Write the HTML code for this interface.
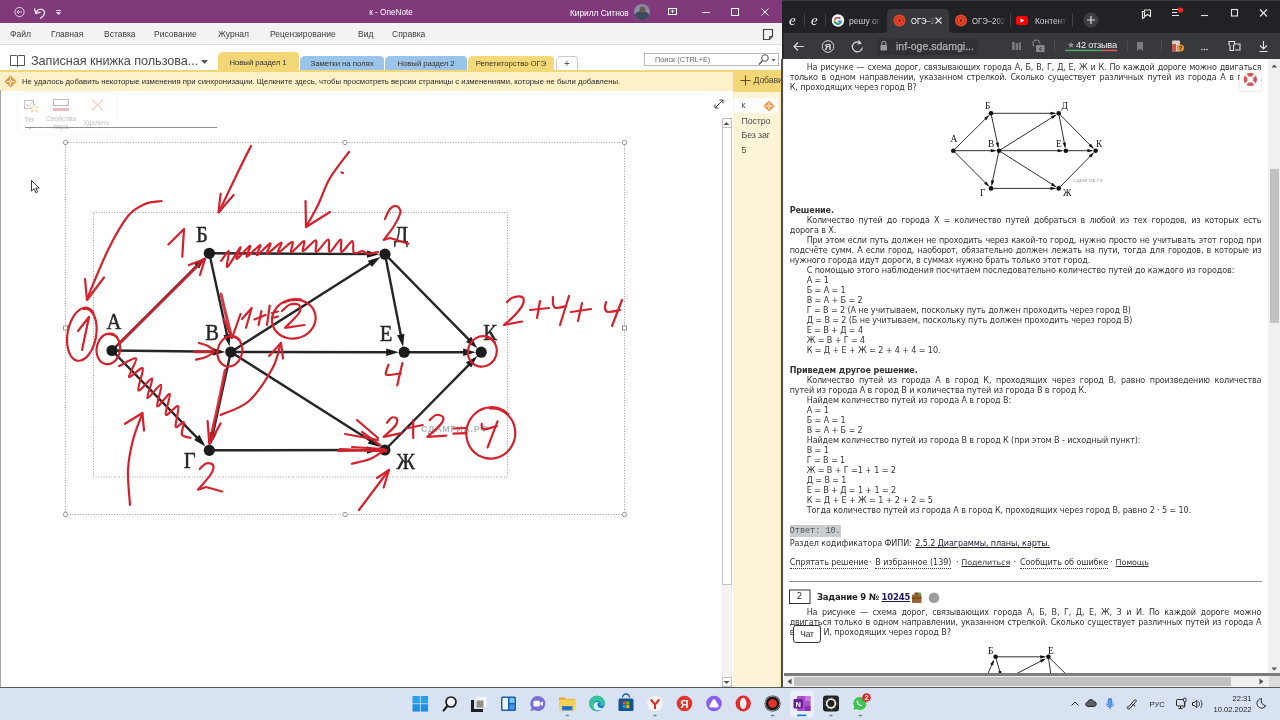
<!DOCTYPE html>
<html lang="ru"><head><meta charset="utf-8"><title>screen</title>
<style>
*{box-sizing:border-box}
html,body{margin:0;padding:0}
#on,#br,#tb{will-change:transform;opacity:0.999}
body{width:1280px;height:720px;overflow:hidden;position:relative;background:#fff;font-family:"Liberation Sans",sans-serif;}
.abs{position:absolute}
/* OneNote */
#on{position:absolute;left:0;top:0;width:782px;height:688px;background:#fff;overflow:hidden}
#on .title{position:absolute;left:0;top:0;width:782px;height:23px;background:#80397b;color:#fff;font-size:8px}
#on .menu{position:absolute;left:0;top:23px;width:782px;height:22px;background:#f3f3f3;border-bottom:1px solid #dcdcdc;font-size:8.5px;color:#3b3b3b}
#on .menu span{position:absolute;top:6px;white-space:nowrap}
#on .nb{position:absolute;left:0;top:45px;width:782px;height:27px;background:#fff}
.tab{position:absolute;height:15px;top:11px;border-radius:5px 4px 0 0;font-size:7.8px;color:#333;text-align:center;line-height:15px;white-space:nowrap;letter-spacing:-0.05px}
#on .info{position:absolute;left:0;top:70px;width:782px;height:21px;background:#fdf1c7;border-top:2.500px solid #f3d777;font-size:7.78px;color:#2b2b2b}
/* Browser */
#br{position:absolute;left:782px;top:0;width:498px;height:688px;background:#fff;overflow:hidden}
#br .tabs{position:absolute;left:0;top:0;width:498px;height:33px;background:#202226}
#br .tool{position:absolute;left:0;top:33px;width:498px;height:27px;background:#37393d}
#br .content{position:absolute;left:2px;top:59px;width:485px;height:613.5px;background:#fff;overflow:hidden;font-family:"DejaVu Sans","Liberation Sans",sans-serif;font-size:8.05px;color:#333;letter-spacing:-0.105px}
.ln{position:absolute;left:5.7px;width:471.6px;height:10px;line-height:10px;white-space:nowrap}
.j{text-align:justify;text-align-last:justify;white-space:normal;letter-spacing:-0.2px}
.in{padding-left:17px}
/* Taskbar */
#tb{position:absolute;left:0;top:687px;width:1280px;height:33px;background:#d9e2f2;border-top:1px solid #5a5a5a}
</style></head>
<body>
<div id="on">
<div class="title">
<svg class="abs" style="left:0;top:0" width="782" height="23" viewBox="0 0 782 23">
<g fill="none" stroke="#e6cfe4" stroke-width="1">
<circle cx="19.5" cy="12" r="4.6"/><path d="M22 12h-5m2-2l-2 2l2 2"/>
<path d="M34.500 8.500l1.300 5l4.700-1.300M36 13c2-5.500 9-4.500 8.500 0c-.3 2.500-2 4-4.500 5.500" stroke="#fff" stroke-width="1.200"/>
<path d="M56 10.5h5" /><path d="M56.5 12.5l2 2l2-2z" fill="#e6cfe4"/>
</g>
<text x="391" y="15" text-anchor="middle" font-size="8.2" fill="#fff" font-family="Liberation Sans, sans-serif">к  -  OneNote</text>
<text x="570" y="15.5" font-size="8.3" fill="#fff" font-family="Liberation Sans, sans-serif">Кирилл Ситнов</text>
<circle cx="642" cy="12" r="8" fill="#8a8aa0"/><path d="M634.6 15a8 8 0 0 0 14.8 0c-2-3-4-4-7.400-4s-5.400 1-7.400 4z" fill="#3d4a5e"/><circle cx="642.500" cy="9.500" r="3" fill="#6b5a55"/>
<g fill="none" stroke="#fff" stroke-width="1">
<rect x="668.500" y="8.500" width="8" height="6"/><path d="M672.500 13v-3m-1.500 1.500l1.500-1.500l1.500 1.500"/>
<path d="M702 12.500h8"/>
<rect x="731.500" y="8.500" width="7" height="7"/>
<path d="M761.500 8.500l7 7m0-7l-7 7"/>
</g></svg>
</div>
<div class="menu">
<span style="left:10px">Файл</span><span style="left:51px">Главная</span><span style="left:104px">Вставка</span><span style="left:154px">Рисование</span><span style="left:218px">Журнал</span><span style="left:270px">Рецензирование</span><span style="left:358px">Вид</span><span style="left:392px">Справка</span>
<svg class="abs" style="left:760px;top:4px" width="16" height="16" viewBox="0 0 16 16"><path d="M3.500 2.500h9v7l-3 3h-6z" fill="none" stroke="#444" stroke-width="1.200"/><path d="M12.500 9.500h-3v3" fill="none" stroke="#444" stroke-width="1"/></svg>
</div>
<div class="nb">
<svg class="abs" style="left:9px;top:9px" width="17" height="14" viewBox="0 0 17 14"><path d="M1.500 1.500h5.500q1.500 0 1.500 1.200q0-1.200 1.500-1.200h5.500v10h-5.500q-1.500 0-1.500 1q0-1-1.500-1h-5.500zM8.500 2.700v9.800" fill="#fff" stroke="#555" stroke-width="1"/></svg>
<div class="abs" style="left:31px;top:8.500px;font-size:12.700px;color:#4a4a4a;white-space:nowrap;letter-spacing:-0.05px">Записная книжка пользова...</div>
<svg class="abs" style="left:200px;top:14px" width="9" height="6" viewBox="0 0 9 6"><path d="M1 1h7l-3.500 4z" fill="#555"/></svg>
<div class="tab" style="left:217.500px;width:81px;top:7px;height:20px;line-height:21px;background:#f3d777;">Новый раздел 1</div>
<div class="tab" style="left:300px;width:84px;background:#9bc4ea;">Заметки на полях</div>
<div class="tab" style="left:385px;width:82px;background:#9bc4ea;">Новый раздел  2</div>
<div class="tab" style="left:468px;width:86px;background:#f4d978;">Репетиторство ОГЭ</div>
<div class="tab" style="left:556px;width:22px;background:#fff;border:1px solid #ccc;border-bottom:none;font-size:10px;line-height:13px;color:#555">+</div>
<div class="abs" style="left:644px;top:8px;width:135px;height:13px;border:1px solid #b9b9b9;background:#fff;font-size:7.3px;color:#666;line-height:11px;padding-left:10px">Поиск (CTRL+E)</div>
<svg class="abs" style="left:757px;top:8px" width="22" height="13" viewBox="0 0 22 13"><circle cx="8" cy="5" r="3.300" fill="none" stroke="#555" stroke-width="1"/><path d="M5.500 7.500l-3.500 4" stroke="#555" stroke-width="1.200"/><path d="M14.500 6h4l-2 2.500z" fill="#555"/></svg>
</div>
<div class="info">
<svg class="abs" style="left:4px;top:3px" width="13" height="13" viewBox="0 0 13 13"><path d="M6.500 0.500l6 6l-6 6l-6-6z" fill="#f0923a"/><path d="M2.500 6.500h8M6.500 2.500v8" stroke="#fff" stroke-width="1"/><circle cx="6.500" cy="6.500" r="1.700" fill="#fff"/><circle cx="6.500" cy="6.500" r="0.900" fill="#f0923a"/></svg>
<div class="abs" style="left:22px;top:5.200px;white-space:nowrap">Не удалось добавить некоторые изменения при синхронизации. Щелкните здесь, чтобы просмотреть версии страницы с изменениями, которые не были добавлены.</div>
<div class="abs" style="left:732.500px;top:-2px;width:49.500px;height:22px;background:#f3d777"></div>
<svg class="abs" style="left:739.500px;top:2.500px" width="11" height="11" viewBox="0 0 11 11"><path d="M0.500 5.500h10M5.500 0.500v10" stroke="#5a5030" stroke-width="1.100"/></svg>
<div class="abs" style="left:753.500px;top:3px;font-size:8.700px;color:#4a4535;white-space:nowrap;letter-spacing:-0.1px">Добави</div>
</div>
<div id="page"><!--PAGE--><div class="abs" style="left:0;top:90px;width:1px;height:598px;background:#a8a4a8"></div>
<!-- faded floating toolbar -->
<div class="abs" style="left:18px;top:93px;width:98px;height:40px;background:#fff;box-shadow:0 0 4px rgba(0,0,0,0.10);opacity:0.55">
<svg class="abs" style="left:4px;top:3px" width="90" height="18" viewBox="0 0 90 18"><rect x="2.500" y="4.500" width="9" height="8" fill="none" stroke="#999" stroke-width="1"/><path d="M4 8l2.500 2.500l4.500-5" fill="none" stroke="#999"/><path d="M12.500 8l1.500 3h3l-2.400 2l1 3.200l-3.100-2l-3 2l1-3.200l-2.500-2h3z" fill="#fff" stroke="#e0b040" stroke-width="0.8"/>
<rect x="31.500" y="3.500" width="15" height="6" fill="#fff" stroke="#888"/><rect x="31" y="12" width="16" height="3" fill="#e07a8a"/>
<path d="M70 3.500l11 11m0-11l-11 11" stroke="#f0a9a0" stroke-width="1.1"/></svg>
<div class="abs" style="left:6.500px;top:22.500px;font-size:6.8px;color:#888">Тег</div><svg class="abs" style="left:9px;top:32.500px" width="6" height="4" viewBox="0 0 6 4"><path d="M0.500 0.500l2.500 2.500l2.500-2.500" fill="none" stroke="#888" stroke-width="0.800"/></svg>
<div class="abs" style="left:24px;top:21.800px;font-size:6.8px;color:#888;width:38px;text-align:center;line-height:8.5px">Свойства пера</div>
<div class="abs" style="left:65.500px;top:26px;font-size:6.8px;color:#999">Удалить</div>
</div>
<div class="abs" style="left:24.500px;top:126.500px;width:192px;height:1px;background:#8f8f8f"></div>
<!-- cursor -->
<svg class="abs" style="left:30px;top:179px" width="12" height="16" viewBox="0 0 12 16"><path d="M1.500 1.500v10.500l2.600-2.300l1.800 4l1.700-.8l-1.800-3.800h3.400z" fill="#fff" stroke="#222" stroke-width="0.9" stroke-linejoin="round"/></svg>
<!-- expand icon -->
<svg class="abs" style="left:713px;top:98px" width="12" height="12" viewBox="0 0 12 12"><path d="M2 10l8-8M2 6.500v3.500h3.500M6.500 2h3.500v3.500" fill="none" stroke="#444" stroke-width="1"/></svg>
<!-- page scrollbar -->
<div class="abs" style="left:721.500px;top:118px;width:10px;height:569px;background:#f4f4f4;border-left:1px solid #ececec;border-right:1px solid #ececec"></div>
<div class="abs" style="left:721.500px;top:118px;width:10px;height:10px;border:1px solid #bdbdbd;background:#fff"></div>
<svg class="abs" style="left:723px;top:120.500px" width="7" height="5" viewBox="0 0 7 5"><path d="M0.500 4l3-3l3 3z" fill="#555"/></svg>
<div class="abs" style="left:721.500px;top:127px;width:10px;height:458px;border:1px solid #c4c4c4;background:#fff"></div>
<div class="abs" style="left:721.500px;top:677px;width:10px;height:10px;border:1px solid #bdbdbd;background:#fff"></div>
<svg class="abs" style="left:723px;top:680px" width="7" height="5" viewBox="0 0 7 5"><path d="M0.500 1l3 3l3-3z" fill="#555"/></svg>
<!-- right pane -->
<div class="abs" style="left:732.500px;top:90px;width:49.500px;height:598px;background:#fdf4d8;border-right:2px solid #f3e3b0"></div>
<div class="abs" style="left:732.500px;top:90px;width:49.500px;height:1.700px;background:#f3d777"></div>
<div class="abs" style="left:733.500px;top:98.300px;width:44px;height:14.500px;background:#fff"></div>
<div class="abs" style="left:741.500px;top:100px;font-size:8.500px;color:#444">к</div>
<svg class="abs" style="left:762.500px;top:99.500px" width="12" height="12" viewBox="0 0 13 13"><path d="M6.500 0.500l6 6l-6 6l-6-6z" fill="#f0923a"/><path d="M2.500 6.500h8M6.500 2.500v8" stroke="#fff" stroke-width="1"/><circle cx="6.500" cy="6.500" r="1.700" fill="#fff"/><circle cx="6.500" cy="6.500" r="0.900" fill="#f0923a"/></svg>
<div class="abs" style="left:741.500px;top:113.500px;font-size:8.800px;color:#4a4a4a;line-height:14.600px;white-space:nowrap;letter-spacing:-0.1px">Постро<br>Без заг<br>5</div>
<div class="abs" style="left:781px;top:59px;width:1px;height:629px;background:#4f4f4f"></div>
<svg class="abs" style="left:0;top:90px" width="782" height="598" viewBox="0 90 782 598" font-family="Liberation Serif, serif">
<g fill="none" stroke="#9a9a9a" stroke-width="1" stroke-dasharray="1 1.6">
<rect x="65.5" y="142.500" width="559" height="372"/>
<rect x="93.500" y="212.500" width="414" height="264.500"/>
</g>
<g fill="#fff" stroke="#8a8a8a" stroke-width="0.9">
<circle cx="65.5" cy="142.5" r="2.2"/>
<circle cx="345" cy="142.5" r="2.2"/>
<circle cx="624.5" cy="142.5" r="2.2"/>
<rect x="63.5" y="326" width="4" height="4"/>
<rect x="622.5" y="326" width="4" height="4"/>
<circle cx="65.5" cy="514.5" r="2.2"/>
<circle cx="345" cy="514.5" r="2.2"/>
<circle cx="624.5" cy="514.5" r="2.2"/>
</g>
<g stroke="#262626" stroke-width="2.4" fill="#1c1c1c" stroke-linecap="round">
<path d="M112.0 350.5L200.8 261.8" fill="none"/>
<path d="M205.4 257.2L199.2 268.6L194.0 263.4Z" stroke="none"/>
<path d="M112.0 350.5L218.8 351.8" fill="none"/>
<path d="M225.3 351.9L212.8 355.5L212.8 348.1Z" stroke="none"/>
<path d="M112.0 350.5L200.9 441.7" fill="none"/>
<path d="M205.5 446.4L194.1 440.0L199.4 434.8Z" stroke="none"/>
<path d="M209.3 253.3L228.2 340.3" fill="none"/>
<path d="M229.6 346.6L223.4 335.2L230.6 333.6Z" stroke="none"/>
<path d="M209.3 253.3L373.0 254.1" fill="none"/>
<path d="M379.5 254.2L367.0 257.8L367.0 250.4Z" stroke="none"/>
<path d="M230.8 352.0L374.9 260.6" fill="none"/>
<path d="M380.4 257.1L371.8 267.0L367.8 260.7Z" stroke="none"/>
<path d="M230.8 352.0L392.2 352.2" fill="none"/>
<path d="M398.7 352.2L386.2 355.9L386.2 348.5Z" stroke="none"/>
<path d="M230.8 352.0L211.9 438.6" fill="none"/>
<path d="M210.5 444.9L209.5 431.9L216.8 433.5Z" stroke="none"/>
<path d="M230.8 352.0L374.8 443.6" fill="none"/>
<path d="M380.3 447.0L367.7 443.5L371.7 437.2Z" stroke="none"/>
<path d="M209.3 450.3L372.9 450.0" fill="none"/>
<path d="M379.4 450.0L366.9 453.7L366.9 446.3Z" stroke="none"/>
<path d="M385.0 254.2L401.9 340.4" fill="none"/>
<path d="M403.1 346.8L397.1 335.2L404.4 333.8Z" stroke="none"/>
<path d="M385.0 254.2L472.8 343.6" fill="none"/>
<path d="M477.3 348.3L466.0 341.9L471.2 336.8Z" stroke="none"/>
<path d="M404.2 352.2L469.2 352.2" fill="none"/>
<path d="M475.7 352.2L463.2 355.9L463.2 348.5Z" stroke="none"/>
<path d="M384.9 450.0L472.8 360.8" fill="none"/>
<path d="M477.3 356.1L471.2 367.6L465.9 362.4Z" stroke="none"/>
<circle cx="112" cy="350.5" r="5.6" stroke="none"/>
<circle cx="209.3" cy="253.3" r="5.6" stroke="none"/>
<circle cx="230.8" cy="352" r="5.6" stroke="none"/>
<circle cx="209.3" cy="450.3" r="5.6" stroke="none"/>
<circle cx="385" cy="254.2" r="5.6" stroke="none"/>
<circle cx="404.2" cy="352.2" r="5.6" stroke="none"/>
<circle cx="481.2" cy="352.2" r="5.6" stroke="none"/>
<circle cx="384.9" cy="450" r="5.6" stroke="none"/>
</g>
<g font-size="24" fill="#262626" stroke="#262626" stroke-width="0.45">
<text transform="translate(106.5 329.2) scale(0.86 1)">А</text>
<text transform="translate(196 241.8) scale(0.86 1)">Б</text>
<text transform="translate(205.2 340) scale(0.86 1)">В</text>
<text transform="translate(183.7 468) scale(0.86 1)">Г</text>
<text transform="translate(394 241.7) scale(0.86 1)">Д</text>
<text transform="translate(379.8 340.5) scale(0.86 1)">Е</text>
<text transform="translate(483.3 340) scale(0.86 1)">К</text>
<text transform="translate(396.5 468.6) scale(0.86 1)">Ж</text>
</g>
<text x="421" y="432" font-size="9" fill="#a9b7bd" font-weight="bold" font-family="Liberation Sans, sans-serif" textLength="67" lengthAdjust="spacing">СДАМГИА.РФ</text>
<g fill="none" stroke="#d4212c" stroke-width="2.2" stroke-linecap="round" stroke-linejoin="round">
<path d="M251.0 146.0C248.8 150.3 243.3 161.0 238.0 172.0C232.7 183.0 222.2 205.3 219.0 212.0"/>
<path d="M220.6 193.8L218.5 212.5L233.6 195.0"/>
<path d="M349.0 152.0C345.8 156.3 335.2 169.2 330.0 178.0C324.8 186.8 322.0 196.8 318.0 205.0C314.0 213.2 308.0 223.3 306.0 227.0"/>
<path d="M305.5 201.0L306.0 227.0L330.0 212.0"/>
<path d="M341.5 172.5L343.0 173.0"/>
<path d="M161.5 201.0C158.8 201.5 150.6 201.5 145.0 204.0C139.4 206.5 134.2 208.3 128.0 216.0C121.8 223.7 114.8 236.2 108.0 250.0C101.2 263.8 90.5 290.8 87.0 299.0"/>
<path d="M85.0 279.0L87.0 300.0L104.0 277.5"/>
<path d="M168.4 244.5L184.0 229.0L182.3 256.7"/>
<path d="M221.1 260.9C222.4 259.3 227.9 250.3 228.9 251.2C229.9 252.2 225.4 267.5 227.3 266.9C229.2 266.2 238.8 248.6 240.3 247.3C241.9 246.0 235.1 259.3 236.7 259.1C238.3 258.8 248.3 246.2 250.0 245.8C251.7 245.4 245.2 256.8 246.9 256.7C248.6 256.6 258.5 245.3 260.2 245.0C261.8 244.7 255.3 255.4 257.0 255.2C258.7 254.9 268.6 243.7 270.3 243.4C272.0 243.2 265.4 253.7 267.2 253.6C269.0 253.5 279.4 242.8 281.2 242.7C283.1 242.5 276.3 252.9 278.1 252.8C279.9 252.7 290.0 242.0 292.2 241.9C294.4 241.7 289.5 252.2 291.4 252.0C293.4 251.9 302.0 241.2 303.9 241.1C305.9 241.0 301.2 251.4 303.1 251.2C305.1 251.1 313.4 240.2 315.6 240.3C317.8 240.4 314.3 252.2 316.4 252.0C318.5 251.9 325.9 239.5 328.1 239.5C330.3 239.5 327.6 252.0 329.7 252.0C331.8 252.0 338.7 239.5 340.6 239.5C342.6 239.5 339.5 251.8 341.4 252.0C343.4 252.3 350.3 241.0 352.3 241.1C354.4 241.2 352.2 251.1 353.9 252.8C355.6 254.5 360.2 251.1 362.5 251.2C364.8 251.4 365.4 253.5 368.0 253.6C370.6 253.7 376.4 252.3 378.1 252.0"/>
<path d="M189.0 265.0L205.0 259.0L200.0 275.0"/>
<path d="M83.3 309.0C83.9 309.0 85.8 308.7 87.0 308.9C88.2 309.2 89.3 309.8 90.3 310.6C91.4 311.5 92.4 312.6 93.2 313.9C94.0 315.3 94.7 316.9 95.2 318.7C95.8 320.4 96.2 322.4 96.4 324.5C96.6 326.5 96.7 328.8 96.6 331.0C96.5 333.2 96.2 335.6 95.8 337.8C95.4 340.0 94.8 342.3 94.0 344.4C93.3 346.5 92.4 348.5 91.5 350.3C90.5 352.1 89.4 353.8 88.2 355.2C87.1 356.6 85.8 357.8 84.6 358.7C83.3 359.5 82.0 360.2 80.7 360.5C79.4 360.8 78.1 360.8 76.9 360.6C75.7 360.3 74.5 359.7 73.5 358.9C72.4 358.0 71.4 356.8 70.6 355.5C69.8 354.1 69.1 352.4 68.5 350.7C68.0 348.9 67.5 346.8 67.3 344.7C67.1 342.6 67.0 340.3 67.1 338.1C67.2 335.8 67.5 333.4 67.9 331.1C68.4 328.9 69.0 326.5 69.7 324.4C70.5 322.3 71.4 320.2 72.3 318.4C73.3 316.5 74.5 314.8 75.6 313.4C76.8 312.0 78.1 310.8 79.4 309.9C80.7 309.0 82.0 308.3 83.3 308.0C84.6 307.7 85.9 307.6 87.2 307.9C88.4 308.2 89.6 308.8 90.7 309.7C91.8 310.5 93.1 312.5 93.6 313.1"/>
<path d="M78.0 331.0L89.0 317.0L82.0 350.0"/>
<path d="M108.5 334.2C109.0 334.2 110.5 334.1 111.5 334.3C112.4 334.5 113.4 334.9 114.3 335.4C115.2 335.9 116.0 336.6 116.7 337.5C117.5 338.3 118.1 339.3 118.6 340.3C119.1 341.4 119.5 342.5 119.8 343.8C120.1 345.0 120.2 346.3 120.2 347.6C120.2 348.9 120.1 350.2 119.9 351.5C119.6 352.8 119.2 354.1 118.7 355.3C118.2 356.5 117.6 357.6 116.9 358.6C116.2 359.6 115.3 360.6 114.4 361.3C113.6 362.1 112.6 362.8 111.6 363.2C110.6 363.7 109.6 364.0 108.5 364.1C107.5 364.3 106.5 364.2 105.5 364.0C104.5 363.8 103.5 363.4 102.6 362.9C101.7 362.3 100.8 361.6 100.1 360.8C99.4 359.9 98.7 358.9 98.2 357.9C97.7 356.8 97.2 355.6 97.0 354.4C96.7 353.1 96.5 351.8 96.5 350.5C96.5 349.1 96.7 347.8 96.9 346.4C97.2 345.1 97.6 343.8 98.1 342.6C98.6 341.4 99.2 340.2 100.0 339.2C100.7 338.1 101.5 337.2 102.4 336.4C103.3 335.6 104.3 335.0 105.3 334.5C106.3 334.0 107.4 333.7 108.5 333.6C109.5 333.4 110.6 333.5 111.6 333.7C112.6 333.9 113.6 334.3 114.5 334.9C115.4 335.4 116.6 336.6 117.1 337.0"/>
<path d="M224.0 319.4L232.0 338.0L240.5 314.0"/>
<path d="M242.0 319.0L251.7 308.0L246.0 327.8"/>
<path d="M254.4 319.4L265.6 315.0"/>
<path d="M261.4 311.0L258.6 325.0"/>
<path d="M269.7 305.6L267.0 325.0"/>
<path d="M272.0 313.0L278.0 311.5"/>
<path d="M272.0 318.0L278.0 316.5"/>
<path d="M284.5 302.4C285.4 302.1 287.9 300.9 289.8 300.4C291.6 300.0 293.5 299.8 295.3 299.8C297.2 299.7 299.1 300.0 300.8 300.4C302.6 300.8 304.3 301.5 305.9 302.3C307.4 303.1 308.9 304.2 310.1 305.3C311.4 306.5 312.5 307.9 313.3 309.3C314.1 310.8 314.8 312.4 315.2 314.0C315.5 315.6 315.7 317.3 315.6 319.0C315.5 320.7 315.1 322.4 314.5 324.0C314.0 325.7 313.1 327.3 312.1 328.7C311.1 330.2 309.8 331.6 308.4 332.8C307.0 334.0 305.4 335.1 303.7 335.9C302.0 336.8 300.2 337.5 298.3 337.9C296.5 338.4 294.5 338.6 292.6 338.6C290.8 338.6 288.8 338.4 287.0 338.0C285.2 337.6 283.5 336.9 281.9 336.1C280.3 335.2 278.8 334.1 277.6 332.9C276.3 331.7 275.2 330.3 274.3 328.9C273.5 327.4 272.8 325.8 272.4 324.1C272.0 322.5 271.9 320.7 272.0 319.0C272.1 317.3 272.5 315.5 273.1 313.9C273.7 312.2 274.5 310.6 275.6 309.1C276.6 307.6 277.9 306.1 279.3 304.9C280.8 303.7 282.4 302.6 284.1 301.7C285.8 300.9 287.7 300.2 289.6 299.7C291.5 299.2 293.5 299.0 295.4 299.0C297.3 299.0 300.1 299.5 301.1 299.6"/>
<path d="M282.0 311.0C283.3 309.9 287.2 305.5 290.0 304.5C292.8 303.5 297.5 303.6 299.0 305.0C300.5 306.4 301.3 309.2 299.0 313.0C296.7 316.8 287.3 325.3 285.0 327.8L304.400 325"/>
<path d="M199.0 343.0C200.5 343.5 205.5 344.6 208.0 346.0C210.5 347.4 214.3 349.6 214.0 351.4C213.7 353.2 209.0 355.6 206.0 357.0C203.0 358.4 197.7 359.2 196.0 359.7"/>
<path d="M231.1 336.6C231.7 336.7 233.3 336.7 234.3 337.0C235.3 337.3 236.2 337.8 237.1 338.4C238.0 339.0 238.8 339.8 239.5 340.7C240.1 341.6 240.7 342.6 241.2 343.7C241.6 344.8 242.0 346.0 242.2 347.3C242.3 348.5 242.4 349.8 242.3 351.1C242.2 352.4 242.0 353.8 241.6 355.0C241.2 356.3 240.7 357.5 240.1 358.7C239.5 359.8 238.7 360.9 237.9 361.8C237.1 362.8 236.1 363.6 235.2 364.3C234.2 365.0 233.1 365.5 232.1 365.9C231.0 366.3 229.9 366.5 228.8 366.5C227.8 366.5 226.7 366.4 225.6 366.1C224.6 365.8 223.6 365.3 222.8 364.7C221.9 364.0 221.0 363.2 220.3 362.3C219.7 361.4 219.0 360.4 218.6 359.2C218.1 358.1 217.8 356.9 217.6 355.6C217.4 354.3 217.4 353.0 217.5 351.7C217.6 350.4 217.8 349.0 218.2 347.7C218.6 346.4 219.1 345.1 219.7 344.0C220.3 342.8 221.1 341.7 221.9 340.8C222.8 339.8 223.7 338.9 224.7 338.2C225.7 337.5 226.8 337.0 227.9 336.6C229.0 336.2 230.1 336.0 231.2 336.0C232.3 336.0 233.4 336.1 234.4 336.4C235.5 336.7 236.5 337.2 237.4 337.9C238.3 338.5 239.4 339.9 239.8 340.3"/>
<path d="M220.6 415.0C225.3 412.7 240.3 408.8 249.0 401.0C257.7 393.2 267.3 377.7 272.6 368.0C277.9 358.3 279.4 347.2 280.8 343.0"/>
<path d="M269.0 356.0L281.0 343.0L283.0 358.5"/>
<path d="M207.6 421.0L209.3 444.0L220.6 423.4"/>
<path d="M119.0 366.1C121.9 364.8 134.4 356.7 136.1 358.5C137.7 360.3 127.9 375.3 129.0 376.9C130.1 378.6 141.1 366.2 142.7 368.4C144.2 370.7 136.8 388.7 138.4 390.4C140.0 392.1 150.6 377.3 152.1 378.6C153.6 379.9 145.9 397.1 147.4 398.2C148.9 399.2 159.4 383.6 161.1 384.9C162.7 386.3 155.9 404.7 157.3 406.2C158.8 407.7 168.4 392.5 169.8 393.9C171.2 395.3 164.4 412.7 165.8 414.7C167.2 416.8 176.4 404.2 178.1 406.2C179.7 408.2 174.8 423.8 175.7 426.5C176.7 429.2 182.7 420.9 183.8 422.3C184.8 423.6 180.8 431.9 181.9 434.5C183.0 437.1 189.0 437.3 190.4 437.9"/>
<path d="M130.0 505.0C129.7 499.2 127.5 480.8 128.0 470.0C128.5 459.2 130.6 449.4 133.0 440.0C135.4 430.6 140.8 417.8 142.4 413.3"/>
<path d="M125.0 423.8L142.4 413.0L144.0 430.7"/>
<path d="M199.7 469.0C200.8 468.1 203.8 464.2 206.0 463.5C208.2 462.8 212.2 463.2 213.0 465.0C213.8 466.8 213.5 469.9 211.0 474.0C208.5 478.1 200.2 487.1 198.0 489.7L206 487L222 491.500"/>
<path d="M388.5 364.7C388.1 365.9 386.2 370.3 386.0 372.0C385.8 373.7 385.1 374.8 387.5 375.0C389.9 375.2 398.5 373.7 400.7 373.4"/>
<path d="M402.4 363.0L397.2 385.5"/>
<path d="M485.8 336.9C486.4 337.1 488.2 337.5 489.3 338.1C490.3 338.6 491.4 339.3 492.3 340.2C493.2 341.0 494.0 342.0 494.6 343.0C495.3 344.1 495.8 345.3 496.2 346.5C496.5 347.7 496.8 349.0 496.8 350.3C496.8 351.6 496.7 352.9 496.4 354.2C496.2 355.5 495.7 356.8 495.1 357.9C494.5 359.1 493.8 360.2 492.9 361.2C492.1 362.2 491.1 363.1 490.0 363.9C489.0 364.6 487.8 365.3 486.6 365.7C485.4 366.1 484.1 366.4 482.9 366.5C481.7 366.7 480.4 366.6 479.1 366.4C477.9 366.1 476.7 365.7 475.6 365.2C474.5 364.6 473.4 363.9 472.5 363.1C471.6 362.2 470.8 361.2 470.1 360.1C469.5 359.1 468.9 357.8 468.5 356.6C468.2 355.4 468.0 354.0 467.9 352.7C467.9 351.4 468.0 350.0 468.3 348.7C468.6 347.4 469.0 346.1 469.6 344.9C470.2 343.7 471.0 342.6 471.9 341.6C472.7 340.6 473.7 339.6 474.8 338.9C475.9 338.1 477.1 337.5 478.3 337.0C479.5 336.6 480.8 336.3 482.1 336.2C483.4 336.0 484.7 336.1 485.9 336.3C487.2 336.6 488.4 337.0 489.5 337.5C490.7 338.1 491.7 338.9 492.7 339.7C493.6 340.6 494.7 342.2 495.1 342.7"/>
<path d="M338.0 450.8L386.0 450.0"/>
<path d="M340.0 449.0L386.0 451.5"/>
<path d="M352.0 447.0L384.0 449.0"/>
<path d="M357.0 420.0L378.0 438.0"/>
<path d="M345.0 434.0L378.0 440.0"/>
<path d="M352.0 463.7C355.0 462.9 364.5 461.3 370.0 459.0C375.5 456.7 382.5 451.3 385.0 449.8"/>
<path d="M362.0 432.0L380.0 445.0"/>
<path d="M387.0 422.6C387.8 421.8 390.3 418.1 392.0 417.5C393.7 416.9 396.5 417.6 397.0 419.0C397.5 420.4 397.2 423.0 395.0 426.0C392.8 429.0 385.6 435.0 383.7 436.8L401.400 433.200"/>
<path d="M406.0 428.5L422.7 425.0"/>
<path d="M413.2 420.0L413.2 438.0"/>
<path d="M429.7 420.0C430.8 419.2 433.8 415.5 436.0 415.0C438.2 414.5 442.2 415.5 443.0 417.0C443.8 418.5 443.6 420.7 441.0 424.0C438.4 427.3 429.7 434.7 427.4 436.8L446.300 435.600"/>
<path d="M453.4 428.5L465.0 428.0"/>
<path d="M453.4 433.7L466.4 433.2"/>
<path d="M489.9 408.3C490.9 408.3 494.1 408.3 496.1 408.7C498.1 409.1 500.2 409.8 502.0 410.8C503.9 411.7 505.7 413.0 507.2 414.4C508.8 415.8 510.2 417.5 511.4 419.3C512.5 421.1 513.4 423.1 514.1 425.2C514.7 427.3 515.1 429.5 515.2 431.6C515.4 433.8 515.2 436.1 514.8 438.2C514.3 440.4 513.6 442.5 512.6 444.5C511.7 446.4 510.5 448.3 509.0 450.0C507.6 451.6 506.0 453.1 504.2 454.4C502.4 455.6 500.5 456.6 498.5 457.3C496.4 458.0 494.3 458.5 492.2 458.6C490.1 458.8 487.9 458.6 485.8 458.2C483.7 457.8 481.6 457.0 479.7 456.1C477.8 455.1 476.0 453.8 474.4 452.4C472.8 450.9 471.4 449.2 470.2 447.4C469.1 445.5 468.1 443.5 467.5 441.4C466.8 439.3 466.4 437.0 466.3 434.8C466.2 432.6 466.3 430.3 466.8 428.1C467.2 425.9 468.0 423.7 468.9 421.7C469.9 419.7 471.2 417.8 472.6 416.1C474.0 414.4 475.7 412.9 477.5 411.6C479.3 410.4 481.4 409.3 483.4 408.6C485.5 407.9 487.7 407.4 489.8 407.3C492.0 407.1 494.2 407.3 496.3 407.7C498.4 408.1 500.6 408.9 502.5 409.9C504.4 410.9 507.0 413.0 507.9 413.6"/>
<path d="M481.7 423.8C481.8 424.5 481.3 427.1 482.0 428.0C482.7 428.9 483.5 429.3 486.0 429.0C488.5 428.7 495.2 426.5 497.0 426.0"/>
<path d="M497.5 421.4L487.6 447.4"/>
<path d="M359.0 510.0L389.0 470.0"/>
<path d="M377.0 478.0L389.0 469.8L383.7 487.5"/>
<path d="M384.9 219.0C385.8 217.3 388.1 211.2 390.0 209.0C391.9 206.8 394.2 205.5 396.0 206.0C397.8 206.5 400.8 208.7 400.5 212.0C400.2 215.3 396.8 221.3 394.0 226.0C391.2 230.7 385.4 237.7 383.7 240.0L390 238L408.500 243.700"/>
<path d="M507.0 302.0C508.0 301.2 510.5 298.3 513.0 297.5C515.5 296.7 520.3 295.9 522.0 297.0C523.7 298.1 524.2 301.0 523.0 304.0C521.8 307.0 518.2 311.5 515.0 315.0C511.8 318.5 505.8 323.3 504.0 325.0L522 321.500"/>
<path d="M530.0 310.0L549.0 308.0"/>
<path d="M540.0 301.0L537.0 318.0"/>
<path d="M553.0 297.0C553.0 298.2 552.5 302.2 553.0 304.0C553.5 305.8 553.8 307.7 556.0 308.0C558.2 308.3 564.3 306.3 566.0 306.0"/>
<path d="M569.0 296.0L560.0 325.0"/>
<path d="M571.0 312.0L591.0 309.0"/>
<path d="M582.0 303.0L578.0 321.0"/>
<path d="M606.0 302.0C605.8 303.0 604.7 306.3 605.0 308.0C605.3 309.7 605.5 311.7 608.0 312.0C610.5 312.3 618.0 310.3 620.0 310.0"/>
<path d="M622.0 300.0L612.0 326.0"/>
</g>
<g fill="none" stroke="#cf222d" stroke-width="3.1" stroke-linecap="round" stroke-linejoin="round" opacity="0.88">
<path d="M118.5 344.5L204.0 259.5"/>
<path d="M221.0 294.0C221.8 297.5 224.2 307.8 226.0 315.0C227.8 322.2 230.6 333.3 231.5 337.0"/>
<path d="M194.7 351.8L213.0 351.8"/>
<path d="M225.3 370.0C223.9 376.7 219.6 398.2 217.0 410.0C214.4 421.8 211.2 435.8 210.0 441.0"/>
</g>
</svg><!--/PAGE--></div>
</div>
<div id="br"><!--BR--><div class="tabs">
<svg class="abs" style="left:0;top:0" width="498" height="33" viewBox="782 0 498 33" font-family="Liberation Sans, sans-serif">
<rect x="782" y="0" width="498" height="1" fill="#3c3c3c"/>
<path d="M883 33q4 0 4-4v-15q0-5 5-5h52q5 0 5 5v15q0 4 4 4z" fill="#37393d"/>
<g font-family="Liberation Serif, serif" font-style="italic" font-size="15" fill="#fff"><text x="789" y="25">e</text><text x="811" y="25">e</text></g>
<g stroke="#3f4145" stroke-width="1"><path d="M804.500 13v14M825.500 13v14M1010.500 13v14M1072.500 13v14"/></g>
<circle cx="838" cy="20.500" r="6.200" fill="#fff"/>
<path d="M842 20.500h-4v1.600h2.300a2.600 2.600 0 1 1-.7-2.900l1.200-1.200a4.200 4.200 0 1 0 1.200 2.500z" fill="#4285f4"/>
<path d="M834.300 19a4.200 4.200 0 0 1 6.500-1l-1.200 1.200a2.600 2.600 0 0 0-3.900.6z" fill="#ea4335"/>
<path d="M834.300 22a4.200 4.200 0 0 1 0-3l1.400.8a2.600 2.600 0 0 0 0 1.400z" fill="#fbbc05"/>
<path d="M834.300 22l1.400-.8a2.600 2.600 0 0 0 3.900.9l1.300 1.100a4.200 4.200 0 0 1-6.600-1.200z" fill="#34a853"/>
<defs><linearGradient id="fd1" x1="0" x2="1"><stop offset="0.7" stop-color="#d0d0d0"/><stop offset="1" stop-color="#d0d0d0" stop-opacity="0.1"/></linearGradient>
<linearGradient id="fd2" x1="0" x2="1"><stop offset="0.65" stop-color="#fff"/><stop offset="1" stop-color="#fff" stop-opacity="0.1"/></linearGradient></defs>
<text x="849" y="24" font-size="9.500" fill="url(#fd1)" textLength="31" lengthAdjust="spacingAndGlyphs">решу ог</text>
<g id="sdam"><circle cx="899.500" cy="20.500" r="6" fill="#e8452c"/><circle cx="899.500" cy="20.500" r="3.800" fill="none" stroke="#7a1d10" stroke-width="0.8" stroke-dasharray="1.500 1"/><circle cx="899.500" cy="20.500" r="1.200" fill="#7a1d10"/></g>
<text x="911" y="24" font-size="9.500" fill="url(#fd2)" textLength="24" lengthAdjust="spacingAndGlyphs">ОГЭ–2</text>
<path d="M935.500 17.500l6 6m0-6l-6 6" stroke="#e8e8e8" stroke-width="1.100"/>
<use href="#sdam" x="61.500"/>
<text x="972" y="24" font-size="9.500" fill="url(#fd1)" textLength="33" lengthAdjust="spacingAndGlyphs">ОГЭ–202</text>
<rect x="1016" y="16" width="12" height="9" rx="2.500" fill="#f00"/><path d="M1020.500 18.300v4.400l3.600-2.200z" fill="#fff"/>
<text x="1035" y="24" font-size="9.500" fill="url(#fd1)" textLength="31" lengthAdjust="spacingAndGlyphs">Контент</text>
<circle cx="1091" cy="20" r="7.500" fill="#3c3e42"/><path d="M1087 20h8M1091 16v8" stroke="#ddd" stroke-width="1.200"/>
<g fill="none" stroke="#e8e8e8" stroke-width="1.100">
<path d="M1144.500 16.500v-6.500h6v6.500l-3-2zM1144.500 11.500h-2v7l2.500-1.800"/>
<path d="M1172 9.500h6M1172 12.500h5M1172 15.500h7"/>
<path d="M1201 15.500h7"/>
<rect x="1231.500" y="9.500" width="6" height="6.500"/>
<path d="M1260 9.500l7 7m0-7l-7 7"/>
</g>
<circle cx="1180.500" cy="10" r="2.600" fill="#f22"/>
</svg></div>
<div class="tool">
<svg class="abs" style="left:0;top:0" width="498" height="27" viewBox="782 33 498 27" font-family="Liberation Sans, sans-serif">
<rect x="782" y="33" width="1.500" height="27" fill="#222"/>
<g fill="none" stroke="#dcdcdc" stroke-width="1.200">
<path d="M804 46.500h-10m4-4l-4 4l4 4"/>
<circle cx="828" cy="46.500" r="5.800" stroke-width="1"/>
<path d="M861.500 44a5 5 0 1 0 .8 3.500M858.500 40.500l2 2.500l-3 1.200"/>
</g>
<text x="827.800" y="49.800" font-size="9.300" fill="#dcdcdc" text-anchor="middle" font-weight="bold">Я</text>
<rect x="877" y="38" width="101" height="17" rx="3" fill="#2f3135"/>
<rect x="880.500" y="45" width="6.500" height="5.500" rx="0.800" fill="#9a9a9a"/><path d="M881.800 45v-1.800a2 2 0 0 1 4 0v1.800" fill="none" stroke="#9a9a9a" stroke-width="1.100"/>
<rect x="890.500" y="38" width="1" height="17" fill="#37393d"/>
<text x="896" y="50.300" font-size="11.200" fill="#b0b0b0" stroke="#b0b0b0" stroke-width="0.25" textLength="78" lengthAdjust="spacingAndGlyphs">inf-oge.sdamgi...</text>
<g fill="#77797d"><rect x="1012" y="42" width="2.600" height="8"/><rect x="1015.600" y="43" width="2.600" height="7"/><rect x="1019" y="42" width="2" height="8"/></g>
<path d="M1034 46a3.500 3.500 0 1 1 6-2.500" fill="none" stroke="#8a8c90" stroke-width="1.100"/><rect x="1036" y="45" width="8.500" height="7" rx="1" fill="#8a8c90"/><text x="1040.200" y="51" font-size="5.500" fill="#37393d" text-anchor="middle" font-weight="bold">4</text>
<g stroke="#4a4c50"><path d="M1054.500 40v13M1127.500 40v13M1161.500 40v13"/></g>
<text x="1067" y="47.500" font-size="9" fill="#8e9093">★</text>
<text x="1076" y="47.500" font-size="9.200" fill="#f0f0f0" letter-spacing="-0.2">42 отзыва</text>
<rect x="1065" y="49.700" width="36" height="1.500" fill="#4cae6a"/><rect x="1101" y="49.700" width="16" height="1.500" fill="#e0595e"/>
<path d="M1137 42h6v9l-3-2.200l-3 2.200z" fill="#7b7d81"/>
<rect x="1172" y="40.500" width="8" height="11" rx="1" fill="#d9cdbf"/><rect x="1172" y="44" width="4" height="7.500" fill="#c8534a"/><circle cx="1180.500" cy="48" r="3.600" fill="#e8912e"/><text x="1180.500" y="50.300" font-size="6" text-anchor="middle" fill="#3a2a10" font-weight="bold">?</text>
<g fill="#dcdcdc"><circle cx="1202" cy="49.500" r="0.800"/><circle cx="1204.500" cy="49.500" r="0.800"/><circle cx="1207" cy="49.500" r="0.800"/></g>
<g fill="none" stroke="#e4e4e4" stroke-width="1.100">
<path d="M1230.500 41.500h4v3l-1 1v5h-3.500v-5l-1-1v-3zM1235 44h5v6h-5"/>
<path d="M1263.500 41v8m-3.500-3.500l3.500 3.500l3.500-3.500M1259.500 51.500h8"/>
</g>
</svg></div>
<div class="content"><svg class="abs" style="left:0;top:0" width="484" height="619" viewBox="784 59 484 619" font-family="Liberation Serif, serif">
<g stroke="#1a1a1a" stroke-width="0.9" fill="#111">
<path d="M953.3 150.7L988.2 116.1" fill="none"/>
<path d="M989.4 114.8L986.3 120.2L984.1 117.9Z" stroke="none"/>
<path d="M953.3 150.7L995.0 150.7" fill="none"/>
<path d="M996.8 150.7L990.8 152.3L990.8 149.1Z" stroke="none"/>
<path d="M953.3 150.7L988.2 185.6" fill="none"/>
<path d="M989.4 186.8L984.1 183.7L986.3 181.5Z" stroke="none"/>
<path d="M991.0 113.3L998.2 146.8" fill="none"/>
<path d="M998.5 148.5L995.7 143.0L998.8 142.3Z" stroke="none"/>
<path d="M991.0 113.3L1054.7 113.3" fill="none"/>
<path d="M1056.5 113.3L1050.5 114.9L1050.5 111.7Z" stroke="none"/>
<path d="M999.0 150.7L1055.3 115.4" fill="none"/>
<path d="M1056.8 114.5L1052.6 119.0L1050.9 116.3Z" stroke="none"/>
<path d="M999.0 150.7L1061.8 150.7" fill="none"/>
<path d="M1063.6 150.7L1057.6 152.3L1057.6 149.1Z" stroke="none"/>
<path d="M999.0 150.7L991.8 184.5" fill="none"/>
<path d="M991.5 186.2L991.1 180.0L994.3 180.7Z" stroke="none"/>
<path d="M999.0 150.7L1055.3 186.3" fill="none"/>
<path d="M1056.8 187.2L1050.9 185.4L1052.6 182.7Z" stroke="none"/>
<path d="M991.0 188.4L1054.7 188.4" fill="none"/>
<path d="M1056.5 188.4L1050.5 190.0L1050.5 186.8Z" stroke="none"/>
<path d="M1058.7 113.3L1065.1 146.8" fill="none"/>
<path d="M1065.4 148.5L1062.7 142.9L1065.8 142.3Z" stroke="none"/>
<path d="M1058.7 113.3L1092.8 147.9" fill="none"/>
<path d="M1094.1 149.1L1088.7 146.0L1091.0 143.7Z" stroke="none"/>
<path d="M1065.8 150.7L1091.6 150.7" fill="none"/>
<path d="M1093.4 150.7L1087.4 152.3L1087.4 149.1Z" stroke="none"/>
<path d="M1058.7 188.4L1092.8 153.6" fill="none"/>
<path d="M1094.1 152.3L1091.0 157.7L1088.7 155.4Z" stroke="none"/>
<circle cx="953.3" cy="150.7" r="2.300" stroke="none"/>
<circle cx="991" cy="113.3" r="2.300" stroke="none"/>
<circle cx="999" cy="150.7" r="2.300" stroke="none"/>
<circle cx="991" cy="188.4" r="2.300" stroke="none"/>
<circle cx="1058.7" cy="113.3" r="2.300" stroke="none"/>
<circle cx="1065.8" cy="150.7" r="2.300" stroke="none"/>
<circle cx="1095.6" cy="150.7" r="2.300" stroke="none"/>
<circle cx="1058.7" cy="188.4" r="2.300" stroke="none"/>
<path d="M995.6 656.8L1044.4 656.8" fill="none"/>
<path d="M1046.2 656.8L1040.2 658.4L1040.2 655.2Z" stroke="none"/>
<circle cx="995.600" cy="656.800" r="2.300" stroke="none"/><circle cx="1048.400" cy="656.800" r="2.300" stroke="none"/>
<path d="M985.0 680.0L993.4 661.2" fill="none"/>
<path d="M994.1 659.5L993.1 665.6L990.2 664.3Z" stroke="none"/>
<path d="M995.6 656.8L1000.9 675.2" fill="none"/>
<path d="M1001.4 676.9L998.2 671.6L1001.3 670.7Z" stroke="none"/>
<path d="M1012.0 676.0L1044.4 659.3" fill="none"/>
<path d="M1046.0 658.5L1041.4 662.7L1040.0 659.8Z" stroke="none"/>
<path d="M1048.400 656.800L1053 690M1048.400 656.800L1072 680" fill="none"/>
</g>
<g font-size="9.400" fill="#111">
<text x="950.5" y="142">А</text>
<text x="985" y="109">Б</text>
<text x="988" y="146.5">В</text>
<text x="980" y="196">Г</text>
<text x="1061.6" y="109">Д</text>
<text x="1056" y="146.5">Е</text>
<text x="1096" y="146.5">К</text>
<text x="1063" y="196">Ж</text>
<text x="988" y="653.5">Б</text>
<text x="1048" y="653.5">Е</text>
</g>
<text x="1073" y="181.500" font-size="4.200" fill="#999" font-family="Liberation Sans, sans-serif" letter-spacing="0.3">СДАМГИА.РФ</text>
<rect x="789" y="581" width="473" height="1" fill="#909090"/>
<rect x="789.500" y="590" width="20.500" height="13.500" fill="#fff" stroke="#333" stroke-width="1"/>
<rect x="912" y="594.500" width="9.500" height="8.500" rx="1" fill="#9a6230"/><rect x="912" y="597.500" width="9.500" height="1.200" fill="#6e431c"/><rect x="914.500" y="592.500" width="4.500" height="2.500" fill="#7a4a20"/><circle cx="919.500" cy="594" r="1.600" fill="#5aa63c"/><circle cx="934" cy="597.800" r="5.300" fill="#9c9c9c"/>
</svg>
<div class="ln j in" style="top:4.1px;">На рисунке — схема дорог, связывающих города А, Б, В, Г, Д, Е, Ж и К. По каждой дороге можно двигаться</div>
<div class="ln j" style="top:14.1px;">только в одном направлении, указанном стрелкой. Сколько существует различных путей из города А в город</div>
<div class="ln " style="top:24.1px;">К, проходящих через город В?</div>
<div class="ln " style="top:146.8px;"><b>Решение.</b></div>
<div class="ln j in" style="top:156.8px;">Количество путей до города X = количество путей добраться в любой из тех городов, из которых есть</div>
<div class="ln " style="top:166.8px;">дорога в X.</div>
<div class="ln j in" style="top:176.8px;">При этом если путь должен не проходить через какой-то город, нужно просто не учитывать этот город при</div>
<div class="ln j" style="top:186.8px;">подсчёте сумм. А если город, наоборот, обязательно должен лежать на пути, тогда для городов, в которые из</div>
<div class="ln " style="top:196.8px;">нужного города идут дороги, в суммах нужно брать только этот город.</div>
<div class="ln in" style="top:206.8px;">С помощью этого наблюдения посчитаем последовательно количество путей до каждого из городов:</div>
<div class="ln in" style="top:216.8px;">А = 1</div>
<div class="ln in" style="top:226.8px;">Б = А = 1</div>
<div class="ln in" style="top:236.8px;">В = А + Б = 2</div>
<div class="ln in" style="top:246.8px;">Г = В = 2 (А не учитываем, поскольку путь должен проходить через город В)</div>
<div class="ln in" style="top:256.8px;">Д = В = 2 (Б не учитываем, поскольку путь должен проходить через город В)</div>
<div class="ln in" style="top:266.8px;">Е = В + Д = 4</div>
<div class="ln in" style="top:276.8px;">Ж = В + Г = 4</div>
<div class="ln in" style="top:286.8px;">К = Д + Е + Ж = 2 + 4 + 4 = 10.</div>
<div class="ln " style="top:306.8px;"><b>Приведем другое решение.</b></div>
<div class="ln j in" style="top:316.8px;">Количество путей из города А в город К, проходящих через город В, равно произведению количества</div>
<div class="ln " style="top:326.8px;">путей из города А в город В и количества путей из города В в город К.</div>
<div class="ln in" style="top:336.8px;">Найдем количество путей из города А в город В:</div>
<div class="ln in" style="top:346.8px;">А = 1</div>
<div class="ln in" style="top:356.8px;">Б = А = 1</div>
<div class="ln in" style="top:366.8px;">В = А + Б = 2</div>
<div class="ln in" style="top:376.8px;">Найдем количество путей из города В в город К (при этом В - исходный пункт):</div>
<div class="ln in" style="top:386.8px;">В = 1</div>
<div class="ln in" style="top:396.8px;">Г = В = 1</div>
<div class="ln in" style="top:406.8px;">Ж = В + Г =1 + 1 = 2</div>
<div class="ln in" style="top:416.8px;">Д = В = 1</div>
<div class="ln in" style="top:426.8px;">Е = В + Д = 1 + 1 = 2</div>
<div class="ln in" style="top:436.8px;">К = Д + Е + Ж = 1 + 2 + 2 = 5</div>
<div class="ln in" style="top:446.8px;">Тогда количество путей из города А в город К, проходящих через город В, равно 2 · 5 = 10.</div>
<div class="ln " style="top:467.0px;"><span style="background:#c9cdd0;font-family:'Liberation Mono',monospace;font-size:8.500px;letter-spacing:0;padding:1px 0 1px 0;color:#555">Ответ: 10.</span></div>
<div class="ln " style="top:480.1px;">Раздел кодификатора ФИПИ: <span style="text-decoration:underline;color:#223;margin-left:1px">2.5.2 Диаграммы, планы, карты.</span></div>
<div class="ln " style="top:499.0px;"><span style="position:absolute;left:0.1px;top:0;border-bottom:1px dotted #333">Спрятать решение</span><span style="position:absolute;left:79.3px;top:0;">·</span><span style="position:absolute;left:85.5px;top:0;border-bottom:1px dotted #333;letter-spacing:-0.06px">В избранное (139)</span><span style="position:absolute;left:166.3px;top:0;">·</span><span style="position:absolute;left:171.6px;top:0;text-decoration:underline;font-size:7.950px">Поделиться</span><span style="position:absolute;left:223.8px;top:0;">·</span><span style="position:absolute;left:230.3px;top:0;border-bottom:1px dotted #333">Сообщить об ошибке</span><span style="position:absolute;left:320.3px;top:0;">·</span><span style="position:absolute;left:325.9px;top:0;text-decoration:underline;font-size:7.950px">Помощь</span></div>
<div class="ln j in" style="top:549.1px;">На рисунке — схема дорог, связывающих города А, Б, В, Г, Д, Е, Ж, З и И. По каждой дороге можно</div>
<div class="ln j" style="top:559.1px;">двигаться только в одном направлении, указанном стрелкой. Сколько существует различных путей из города А</div>
<div class="ln " style="top:569.1px;">в город И, проходящих через город В?</div><div class="abs" style="left:5px;top:531px;width:21px;text-align:center;font-size:8.600px;line-height:13.500px">2</div>
<div class="abs" style="left:33px;top:533px;font-size:8.500px;font-weight:bold;white-space:nowrap;letter-spacing:-0.2px;color:#222">Задание 9 № <span style="text-decoration:underline;color:#1a1a5a">10245</span></div>
<div class="abs" style="left:456.300px;top:11.300px;width:20.500px;height:20.300px;border-radius:3px;background:#fff;box-shadow:0 0 2.500px rgba(150,90,90,0.4)"><svg style="position:absolute;left:0;top:0" width="20.500" height="20.300" viewBox="0 0 20.500 20.300"><circle cx="10.300" cy="9.400" r="4.850" fill="none" stroke="#d3555c" stroke-width="3.700"/><g stroke="#fbeeee" stroke-width="2.300"><path d="M10.300 9.400m2.100-2.100l2.700-2.700M10.300 9.400m-2.100-2.100l-2.700-2.700M10.300 9.400m2.100 2.100l2.700 2.700M10.300 9.400m-2.100 2.100l-2.700 2.700"/></g></svg></div>
<div class="abs" style="left:9px;top:566px;width:28px;height:18px;border:1px solid #333;border-radius:3px;background:#fff;font-size:8.400px;line-height:16px;text-align:center;font-family:'Liberation Sans',sans-serif;color:#222">Чат</div>
</div>
<div class="abs" style="left:0;top:59px;width:1px;height:629px;background:#4f4f4f"></div><div class="abs" style="left:1px;top:59px;width:1px;height:613px;background:#f2f2f2"></div>
<div class="abs" style="left:486px;top:59px;width:12px;height:617px;background:#f0f0f0"></div>
<div class="abs" style="left:488px;top:168.500px;width:9px;height:154px;background:#c1c1c1"></div>
<svg class="abs" style="left:488.600px;top:63.500px" width="6.500" height="4" viewBox="0 0 8 5"><path d="M0.500 4.500l3.500-4l3.500 4z" fill="#505050"/></svg>
<svg class="abs" style="left:488.600px;top:667px" width="6.500" height="4" viewBox="0 0 8 5"><path d="M0.500 0.500l3.500 4l3.500-4z" fill="#505050"/></svg>
<div class="abs" style="left:2px;top:672.500px;width:496px;height:3px;background:#7c7c7c"></div>
<div class="abs" style="left:2px;top:675.500px;width:496px;height:11.500px;background:#f0f0f0"></div>
<div class="abs" style="left:12px;top:677px;width:437px;height:8.500px;background:#c1c1c1"></div>
<svg class="abs" style="left:5px;top:678px" width="5" height="7" viewBox="0 0 5 7"><path d="M4.500 0.500l-4 3l4 3z" fill="#505050"/></svg>
<svg class="abs" style="left:477px;top:678px" width="5" height="7" viewBox="0 0 5 7"><path d="M0.500 0.500l4 3l-4 3z" fill="#505050"/></svg>
<div class="abs" style="left:487px;top:675.500px;width:11px;height:11.500px;background:#dcdcdc"></div>
<div class="abs" style="left:0;top:687px;width:498px;height:1px;background:#555"></div>
<!--/BR--></div>
<div id="tb"><!--TB--><svg class="abs" style="left:0;top:0" width="1280" height="32" viewBox="0 688 1280 32" font-family="Liberation Sans, sans-serif">
<!-- windows -->
<g fill="#1f8fe0"><rect x="412.500" y="696" width="7.400" height="7.400" fill="#2aa0ea"/><rect x="420.700" y="696" width="7.400" height="7.400" fill="#2aa0ea"/><rect x="412.500" y="704.200" width="7.400" height="7.400"/><rect x="420.700" y="704.200" width="7.400" height="7.400"/></g>
<!-- search -->
<circle cx="451" cy="702" r="5" fill="#f4f7fb" stroke="#1b1b1b" stroke-width="1.700"/><path d="M447.300 706l-3.800 4.600" stroke="#1b1b1b" stroke-width="2" stroke-linecap="round"/>
<!-- task view -->
<rect x="476" y="697" width="10.500" height="10" fill="#f6f6f6"/><rect x="476.500" y="700.500" width="7" height="7" fill="#8f8f8f"/><path d="M472.500 700v10.500h10.500" fill="none" stroke="#1e1e1e" stroke-width="3"/>
<!-- widgets -->
<rect x="501" y="696.500" width="15" height="14.500" rx="1.500" fill="#1c5fb0"/><rect x="502.500" y="698" width="5.500" height="11.500" fill="#f2f8ff"/><rect x="509.500" y="698" width="5" height="5" fill="#7cc4f5"/><rect x="509.500" y="704.500" width="5" height="5" fill="#3f9be8"/>
<!-- chat -->
<path d="M538 696a7.500 7.500 0 1 1-3.800 14l-3.700 1.200l1.100-3.600a7.500 7.500 0 0 1 6.400-11.600z" fill="#7b6fd6"/><rect x="533.500" y="700.800" width="6.200" height="5.600" rx="1.200" fill="#fff"/><path d="M540 703l2.800-1.800v4.800l-2.800-1.800z" fill="#fff"/>
<!-- explorer -->
<path d="M559 697.500h5.500l1.500 1.500h9v2h-16z" fill="#e6a520"/><rect x="559" y="699.500" width="16.500" height="11" rx="0.800" fill="#f8d057"/><rect x="562" y="706" width="10.500" height="4.500" fill="#2b7fd0"/><rect x="563.500" y="707.500" width="7.500" height="1.500" fill="#1a5fa8"/>
<!-- edge -->
<circle cx="597" cy="703.500" r="7.800" fill="#1b7fd0"/><path d="M589.300 702a7.800 7.800 0 0 1 15.400 .5c0 3-3 3.500-5 3c1.500-1 1.500-4-1.700-4.700c-3.500-.7-5 2.500-4.500 5.200c.5 2.500 2.500 4.500 5 5a7.800 7.800 0 0 1-9.200-9z" fill="#35c59b"/><path d="M593.500 705.500c0 3 2.500 5.500 6.500 4.800c2-.4 3.500-1.500 4.200-2.800c-2.500 1.500-6 .8-6.700-2c-.4-1.800 .5-3 1.500-3.500c-3-.5-5.500 1-5.500 3.500z" fill="#dff4ff"/>
<!-- store -->
<path d="M622.500 697.500a3.500 3.500 0 0 1 7 0" fill="none" stroke="#1a5a9a" stroke-width="1.300"/><rect x="618.500" y="698.500" width="15" height="12.500" rx="1.500" fill="#12538f"/><rect x="622.700" y="701.500" width="3" height="3" fill="#f25022"/><rect x="626.300" y="701.500" width="3" height="3" fill="#7fba00"/><rect x="622.700" y="705.100" width="3" height="3" fill="#00a4ef"/><rect x="626.300" y="705.100" width="3" height="3" fill="#ffb900"/>
<!-- yandex browser -->
<circle cx="655" cy="703.500" r="7.800" fill="#f4f4f4"/><path d="M650.800 699.500l4.200 5.200v4.300M659.200 699.500l-4.200 5.200" fill="none" stroke="#e02a22" stroke-width="2"/>
<!-- Я -->
<circle cx="684.500" cy="703.500" r="7.800" fill="#e3342c"/><text x="684.500" y="707.800" font-size="11.500" font-weight="bold" fill="#fff" text-anchor="middle">Я</text>
<!-- alice -->
<circle cx="714" cy="703.500" r="7.800" fill="#8b5cf0"/><path d="M714 699.300c.8 0 1.300 .5 1.700 1.200l2.700 4.800c.7 1.300-.2 2.300-1.500 2.300h-5.800c-1.300 0-2.200-1-1.500-2.300l2.700-4.800c.4-.7 .9-1.200 1.700-1.200z" fill="#fff"/>
<!-- opera -->
<ellipse cx="743.200" cy="703.500" rx="7.600" ry="7.900" fill="#e22a2a"/><ellipse cx="743.200" cy="703.500" rx="3.300" ry="5.700" fill="#f4eef2"/>
<!-- record -->
<circle cx="772.600" cy="703.500" r="8" fill="#1a1a1a"/><circle cx="772.600" cy="703.500" r="7.200" fill="none" stroke="#e6e6e6" stroke-width="0.600"/><circle cx="772.600" cy="703.500" r="4.300" fill="#e8312c"/>
<!-- onenote -->
<rect x="790" y="690.500" width="24" height="27" rx="3" fill="#eaf0fa"/>
<rect x="797" y="696" width="13.500" height="15" rx="1" fill="#a94fc8"/><rect x="805" y="696" width="5.500" height="5" fill="#c77be0"/><rect x="805" y="706" width="5.500" height="5" fill="#8a2fb0"/><rect x="793.500" y="699" width="9.500" height="9.500" rx="1" fill="#6c1f9a"/><text x="798.200" y="706.800" font-size="7.500" font-weight="bold" fill="#fff" text-anchor="middle">N</text>
<rect x="797" y="714.500" width="9.500" height="1.800" rx="0.900" fill="#1f78c8"/>
<!-- app -->
<rect x="823" y="695.500" width="16" height="16" rx="3" fill="#1f2326"/><circle cx="831" cy="703.500" r="4.300" fill="none" stroke="#f0efe8" stroke-width="1.700"/><circle cx="831" cy="703.500" r="6" fill="none" stroke="#c98a3a" stroke-width="0.700" stroke-dasharray="1.500 2.500"/>
<!-- whatsapp -->
<path d="M860 696.500a7 7 0 1 1-3.500 13.100l-3.800 1l1-3.700a7 7 0 0 1 6.300-10.400z" fill="#3ec251" stroke="#e8f7ea" stroke-width="0.800"/><path d="M857 700.500c-.8 .8-.5 2.500 1 4s3.300 2.300 4.300 1.300l-.9-1.300l-1.100 .4c-.8-.3-1.800-1.300-2.100-2.100l.5-1z" fill="#fff"/>
<circle cx="866.500" cy="697.500" r="4.300" fill="#e02424"/><text x="866.500" y="700.300" font-size="7.500" font-weight="bold" fill="#fff" text-anchor="middle">2</text>
<!-- indicators -->
<g fill="#7a7f88"><rect x="565.500" y="714.700" width="3.500" height="1.500" rx="0.700"/><rect x="653.300" y="714.700" width="3.500" height="1.500" rx="0.700"/><rect x="770.900" y="714.700" width="3.500" height="1.500" rx="0.700"/><rect x="829.300" y="714.700" width="3.500" height="1.500" rx="0.700"/><rect x="858.700" y="714.700" width="3.500" height="1.500" rx="0.700"/></g>
<!-- tray -->
<g fill="none" stroke="#2a2a2a" stroke-width="1">
<path d="M1071.500 705.500l3.500-3.500l3.500 3.500"/>
<path d="M1087.500 706.500a2.300 2.300 0 0 1 .3-4.500a3.200 3.200 0 0 1 6-.6a2.600 2.600 0 0 1 .6 5.100z" fill="#5d6066" stroke="#2a2a2a"/>
<rect x="1108.200" y="698.500" width="3.600" height="7" rx="1.800" stroke="#2f7fe0" fill="#5aa0f0"/><path d="M1106.500 703.500a3.500 3.500 0 0 0 7 0M1110 707v2.200" stroke="#2f7fe0"/>
<path d="M1127.500 708.500c-1-1 0-2.500 1-1.500l6-7c1-1 2.500 .5 1.500 1.500l-6 7c-1.500 1-2.500 0-2.500 0zM1132 705c1.500-.5 3 0 3 1.500"/>
<rect x="1176.500" y="699.500" width="8" height="6.500" rx="0.800"/><path d="M1178.500 708.500h4M1180.500 706v2.500"/><rect x="1183.500" y="698" width="2.600" height="4" rx="1.300" fill="#d9e2f2"/><path d="M1184.800 702v5h-2"/>
<path d="M1192.500 702.500h1.800l2.500-2.300v7.600l-2.500-2.300h-1.800z"/><path d="M1198.500 701.500a3.500 3.500 0 0 1 0 5M1200.300 699.800a6 6 0 0 1 0 8.400" stroke-width="0.800"/>
<path d="M1261.500 698.500a4.800 4.800 0 1 0 4.300 7.400a5.500 5.500 0 0 1-4.300-7.400z"/>
</g>
<text x="1149.500" y="707" font-size="7.600" fill="#1f1f1f">РУС</text>
<text x="1251.500" y="701.300" font-size="7.600" fill="#1f1f1f" text-anchor="end">22:31</text>
<text x="1251.500" y="712" font-size="7.600" fill="#1f1f1f" text-anchor="end">10.02.2022</text>
</svg>
<!--/TB--></div>
</body></html>
